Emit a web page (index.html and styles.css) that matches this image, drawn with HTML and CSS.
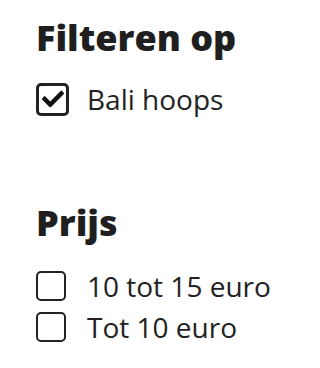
FILE: index.html
```html
<!DOCTYPE html>
<html lang="nl">
<head>
<meta charset="utf-8">
<link rel="stylesheet" href="styles.css">
</head>
<body>
<section class="filters">
  <h2 class="title title-first">Filteren op</h2>
  <ul class="options">
    <li class="option">
      <span class="slot">
        <span class="box checked">
          <svg viewBox="0 0 512 512" class="tick"><path d="M173.898 439.404l-166.4-166.4c-9.997-9.997-9.997-26.206 0-36.204l36.203-36.204c9.997-9.998 26.207-9.998 36.204 0L192 312.69 432.095 72.596c9.997-9.997 26.207-9.997 36.204 0l36.203 36.204c9.997 9.997 9.997 26.206 0 36.204l-294.4 294.401c-9.998 9.997-26.207 9.997-36.204-.001z"/></svg>
        </span>
      </span>
      <span class="label">Bali hoops</span>
    </li>
  </ul>
  <h2 class="title title-second">Prijs</h2>
  <ul class="options options-price">
    <li class="option"><span class="slot"><span class="box"></span></span><span class="label">10 tot 15 euro</span></li>
    <li class="option"><span class="slot"><span class="box"></span></span><span class="label">Tot 10 euro</span></li>
  </ul>
</section>
</body>
</html>
```
FILE: styles.css
```css
html, body {
  margin: 0;
  padding: 0;
  background: #ffffff;
}
body {
  font-family: "Open Sans", "Noto Sans", sans-serif;
  color: #222222;
}
.filters {
  display: flex;
  flex-direction: column;
  padding-left: 36px;
}
.title {
  margin: 0;
  font-size: 36px;
  font-weight: 800;
  line-height: 44px;
  color: #1f1f1f;
}
.title-first {
  margin-top: 16px;
}
.title-second {
  margin-top: 82px;
}
.options {
  list-style: none;
  margin: 19px 0 0;
  padding: 0;
  display: flex;
  flex-direction: column;
  gap: 1px;
}
.options-price {
  margin-top: 21px;
}
.option {
  display: flex;
  align-items: center;
  gap: 18px;
  height: 40px;
  font-size: 28px;
  line-height: 40px;
}
.slot {
  width: 33px;
  flex: none;
  display: flex;
  align-items: center;
}
.box {
  box-sizing: border-box;
  width: 30px;
  height: 30px;
  border: 2.5px solid #222222;
  border-radius: 5px;
  display: flex;
  align-items: center;
  justify-content: center;
  flex: none;
}
.box.checked {
  width: 33px;
  height: 33px;
  border-width: 3px;
}
.tick {
  width: 22px;
  height: 22px;
  fill: #111111;
}
.label {
  color: #222222;
}
```
